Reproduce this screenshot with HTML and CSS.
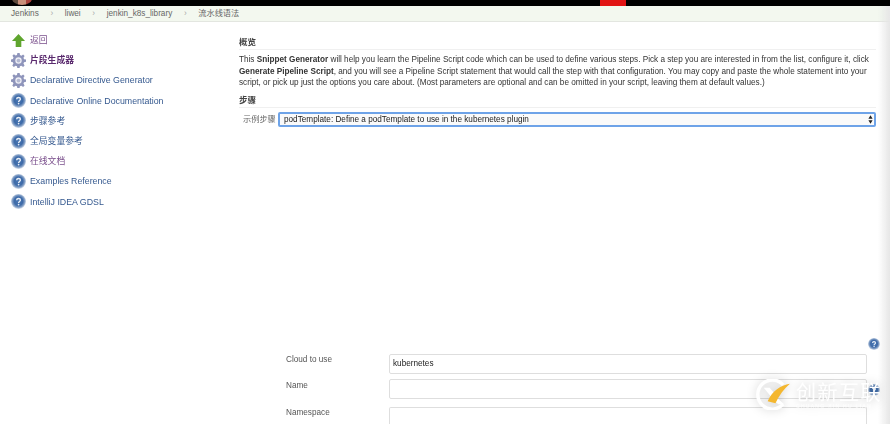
FILE: index.html
```html
<!DOCTYPE html>
<html lang="zh">
<head>
<meta charset="utf-8">
<title>流水线语法</title>
<link rel="stylesheet" href="styles.css">
</head>
<body>
<svg class="defs" width="0" height="0" aria-hidden="true">
  <defs>
    <radialGradient id="helpGrad" cx="50%" cy="48%" r="52%">
      <stop offset="0%" stop-color="#4a78b4"/>
      <stop offset="55%" stop-color="#3d6aa8"/>
      <stop offset="78%" stop-color="#7f9cc4"/>
      <stop offset="100%" stop-color="#dbe3ee"/>
    </radialGradient>
    <symbol id="help" viewBox="0 0 16 16">
      <circle cx="8" cy="8" r="8" fill="url(#helpGrad)"/>
      <path d="M6 6.600C6.100 5.400 7 4.800 8 4.800c1.200 0 2 .7 2 1.700 0 1.500-1.900 1.500-1.900 3" fill="none" stroke="#e9eff7" stroke-width="1.500"/>
      <circle cx="8.100" cy="11.300" r=".9" fill="#e9eff7"/>
    </symbol>
    <symbol id="gear" viewBox="0 0 16 16">
      <path d="M6.800 0h2.400l.4 2.200 1.500.6L12.900 1.600l1.600 1.600-1.200 1.900.6 1.500 2.100.4v2.400l-2.100.4-.6 1.500 1.200 1.900-1.600 1.600-1.800-1.200-1.600.6-.4 2.200H6.800l-.4-2.200-1.600-.6-1.800 1.200-1.600-1.600 1.200-1.900-.6-1.500L0 9.200V6.800l2.100-.4.6-1.500-1.200-1.900 1.600-1.600 1.800 1.200 1.500-.6z" fill="#8f95bb"/>
      <circle cx="8" cy="8" r="3.400" fill="#eeeef5"/>
      <circle cx="8" cy="8" r="2" fill="#b4b9d2"/>
    </symbol>
    <symbol id="up" viewBox="0 0 16 16">
      <path d="M8 1 15 8.500H11V15H5V8.500H1z" fill="#5fa52e"/>
    </symbol>
  </defs>
</svg>

<div class="shot">
<header class="topbar">
  <div class="avatar"></div>
  <div class="redblock"></div>
</header>

<nav class="crumbs">
  <a>Jenkins</a><span class="sep">›</span>
  <a>liwei</a><span class="sep">›</span>
  <a>jenkin_k8s_library</a><span class="sep">›</span>
  <a>流水线语法</a>
</nav>

<div class="page">
  <aside class="side">
    <a class="item"><svg class="ico"><use href="#up"/></svg><span class="visited">返回</span></a>
    <a class="item"><svg class="ico"><use href="#gear"/></svg><span class="current">片段生成器</span></a>
    <a class="item"><svg class="ico"><use href="#gear"/></svg><span>Declarative Directive Generator</span></a>
    <a class="item"><svg class="ico"><use href="#help"/></svg><span>Declarative Online Documentation</span></a>
    <a class="item"><svg class="ico"><use href="#help"/></svg><span>步骤参考</span></a>
    <a class="item"><svg class="ico"><use href="#help"/></svg><span>全局变量参考</span></a>
    <a class="item"><svg class="ico"><use href="#help"/></svg><span class="visited">在线文档</span></a>
    <a class="item"><svg class="ico"><use href="#help"/></svg><span>Examples Reference</span></a>
    <a class="item"><svg class="ico"><use href="#help"/></svg><span>IntelliJ IDEA GDSL</span></a>
  </aside>

  <main class="main">
    <h2 class="head">概览</h2>
    <p class="intro">This <b>Snippet Generator</b> will help you learn the Pipeline Script code which can be used to define various steps. Pick a step you are interested in from the list, configure it, click <b>Generate Pipeline Script</b>, and you will see a Pipeline Script statement that would call the step with that configuration. You may copy and paste the whole statement into your script, or pick up just the options you care about. (Most parameters are optional and can be omitted in your script, leaving them at default values.)</p>
    <h2 class="head step-head">步骤</h2>
    <div class="step-row">
      <label class="step-label">示例步骤</label>
      <div class="select">
        <span>podTemplate: Define a podTemplate to use in the kubernetes plugin</span>
        <svg class="arrows" viewBox="0 0 6 10"><path d="M3 0 5.500 4H.5zM3 10 .5 6h5z" fill="#222"/></svg>
      </div>
    </div>

    <div class="help-row"><svg class="help-ico"><use href="#help"/></svg></div>
    <div class="form">
      <label class="f-label">Cloud to use</label>
      <div class="f-input">kubernetes</div>
      <span></span>
      <label class="f-label l2">Name</label>
      <div class="f-input"></div>
      <svg class="help-ico h2"><use href="#help"/></svg>
      <label class="f-label l3">Namespace</label>
      <div class="f-input tall"></div>
      <span></span>
    </div>
  </main>
  <div class="edge"></div>
</div>
</div>

<div class="watermark">
  <svg class="wm-logo" viewBox="0 0 36 32">
    <path d="M29 6A15 15 0 1 0 29 26" fill="none" stroke="#fff" stroke-width="3.500"/>
    <path d="M9 9h6l6 7-3 4zM21 18l9 8h-6l-6-5z" fill="#fff"/>
    <path d="M13 23C18 12 26 7 36 5 30 10 25 17 21 25z" fill="#f4b72f"/>
  </svg>
  <div class="wm-text">
    <span class="wm-cn">创新互联</span>
    <span class="wm-en">CHUANG XIN HU LIAN</span>
  </div>
</div>
</body>
</html>
```
FILE: styles.css
```css
* { box-sizing: border-box; }
html, body { margin: 0; height: 424px; overflow: hidden; }
body {
  position: relative;
  background: #fff;
  font-family: "Liberation Sans", "Noto Sans CJK SC", sans-serif;
  font-size: 8.2px;
  color: #333;
}
.defs { position: absolute; }
.shot { height: 424px; overflow: hidden; filter: blur(.35px); }

.topbar { height: 6px; background: #000; position: relative; overflow: hidden; }
.avatar {
  position: absolute; left: 12px; top: -8px; width: 20px; height: 13px;
  border-radius: 50%;
  background: linear-gradient(90deg, #5d4a3c 0 30%, #c9907a 30% 70%, #a8423c 70%);
}
.redblock { position: absolute; left: 600px; top: 0; width: 26px; height: 6px; background: #e11414; }

.crumbs {
  height: 16px;
  background: #f3f8ef;
  border-bottom: 1px solid #e3e6e0;
  padding-left: 11px;
  display: flex;
  align-items: center;
  color: #666;
  font-size: 8.2px;
  line-height: 15px;
}
.sep { width: 26px; text-align: center; color: #aaa; }

.page { display: flex; height: 402px; position: relative; }
.side { width: 239px; padding: 8px 0 0 11px; flex: none; }
.item { display: flex; align-items: center; height: 20.2px; color: #35598f; font-size: 8.8px; line-height: 14px; }
.ico { width: 15px; height: 15px; margin-right: 4px; flex: none; }
.visited { color: #7a4f8c; }
.current { color: #5a2a6e; font-weight: bold; }

.main { width: 637px; flex: none; padding-top: 14px; }
.head {
  margin: 0;
  font-size: 8.5px;
  font-weight: bold;
  line-height: 12px;
  color: #444;
  padding-bottom: 1px;
  border-bottom: 1px solid #f0f0f0;
}
.intro { margin: 4px 0 0; line-height: 11.7px; color: #333; }
.step-head { margin-top: 5px; }
.step-row { display: flex; align-items: center; margin-top: 4px; line-height: 12px; }
.step-label { width: 39px; padding-left: 4px; color: #666; white-space: nowrap; }
.select {
  flex: 1;
  height: 15px;
  border: 1px solid #fff;
  border-radius: 2px;
  outline: 2px solid #6ea3e8;
  outline-offset: -2px;
  background: #fafafa;
  display: flex;
  align-items: center;
  justify-content: space-between;
  padding: 0 2px 0 5px;
  color: #222;
}
.arrows { width: 5px; height: 9px; }

.help-row { display: flex; justify-content: flex-end; margin-top: 211px; margin-right: -4px; height: 14px; }
.help-ico { width: 12px; height: 12px; }

.form {
  display: grid;
  grid-template-columns: 103px 478px 1fr;
  grid-template-rows: 25px 28px 18px;
  margin: 2px -4px 0 47px;
  align-items: start;
}
.h2 { justify-self: end; margin-top: 5px; }
.f-label { color: #555; line-height: 11px; }
.l2 { margin-top: 1px; }
.f-input {
  height: 20px;
  border: 1px solid #dedede;
  border-radius: 2px;
  padding-left: 3px;
  line-height: 18px;
  color: #222;
}
.tall { height: 18px; border-bottom: none; border-radius: 2px 2px 0 0; }

.edge {
  position: absolute; right: 0; top: -16px; bottom: 0; width: 12px;
  background: linear-gradient(90deg, rgba(238,238,238,0), #e6e6e6);
}

.watermark {
  position: absolute; left: 755px; top: 379px;
  display: flex; align-items: flex-start; gap: 6px;
  color: #fff;
  filter: drop-shadow(0 0 5px rgba(0,0,0,.2));
}
.wm-logo { width: 35px; height: 31px; flex: none; }
.wm-text { display: flex; flex-direction: column; padding-top: 4px; }
.wm-cn { font-size: 20px; line-height: 20px; letter-spacing: 1.5px; white-space: nowrap; }
.wm-en { font-size: 5px; line-height: 7px; letter-spacing: 1.3px; white-space: nowrap; opacity: .8; }
```
